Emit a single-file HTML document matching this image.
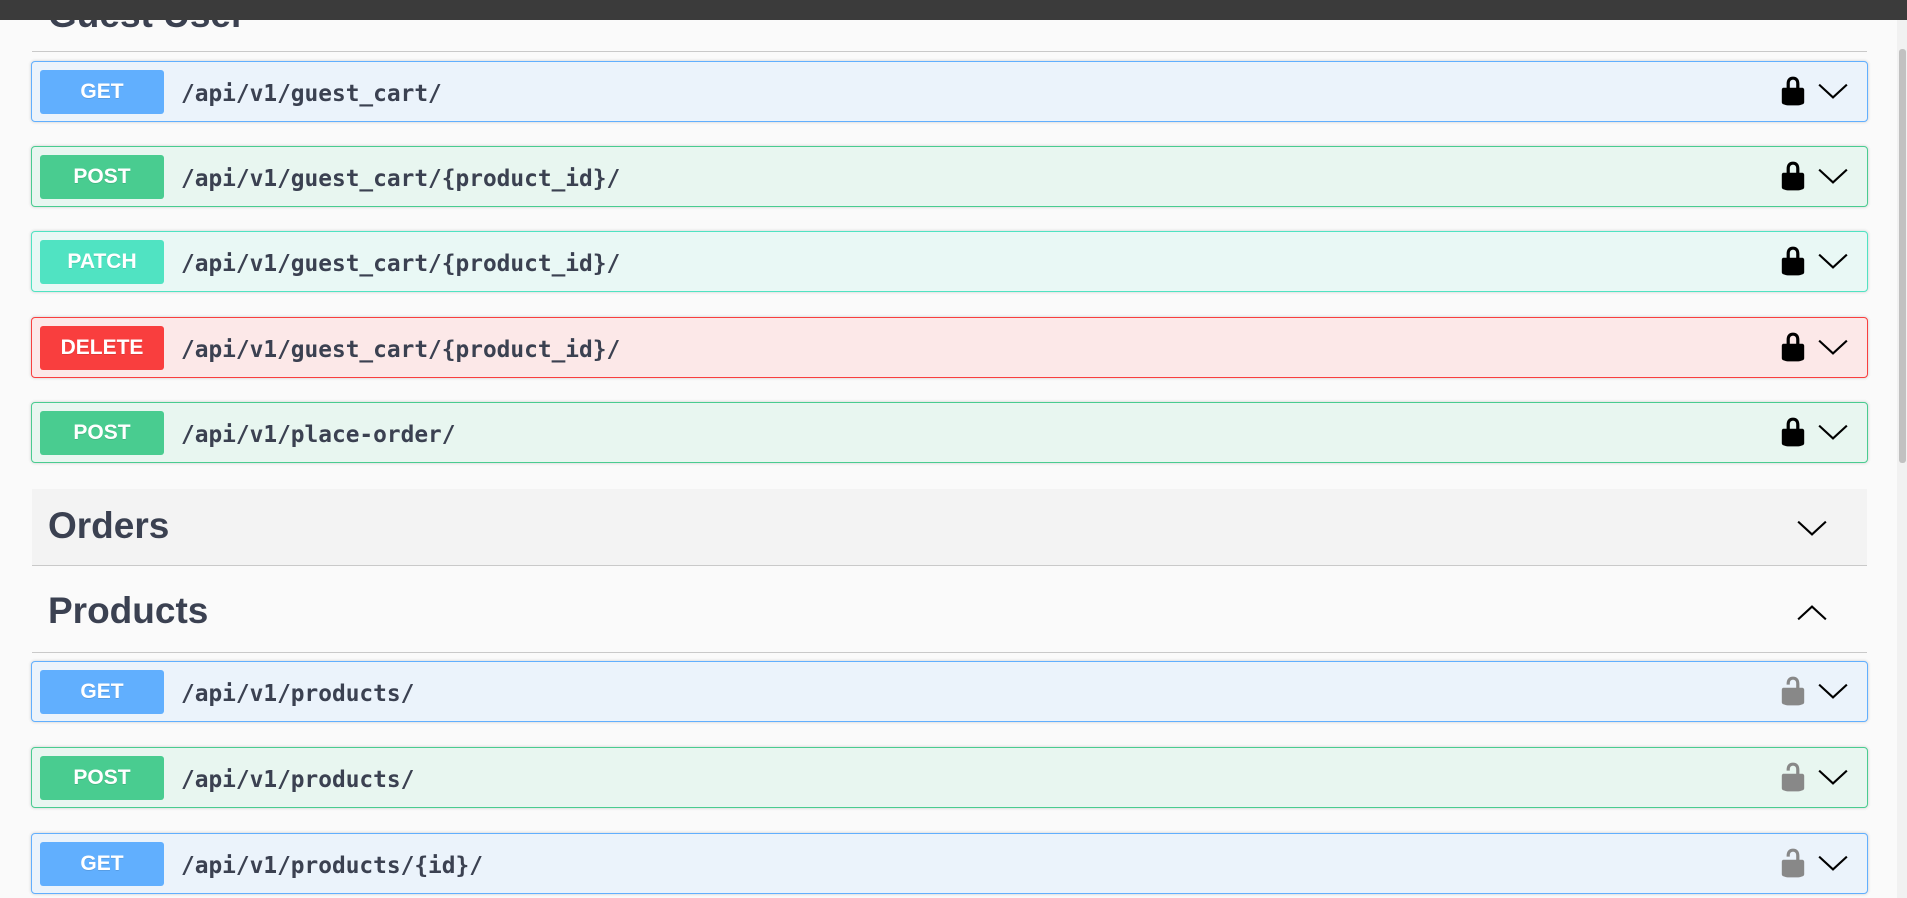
<!DOCTYPE html>
<html><head><meta charset="utf-8"><style>
*{margin:0;padding:0;box-sizing:border-box}
body{width:1907px;height:898px;overflow:hidden;background:#fafafa;position:relative;font-family:"Liberation Sans",sans-serif}
.top{position:absolute;left:0;top:0;width:1907px;height:20px;background:#3b3b3b;z-index:5}
.sb{position:absolute;left:1897px;top:20px;width:10px;height:878px;background:#f1f1f1}
.sb i{position:absolute;left:2px;top:29px;width:7px;height:414px;background:#c1c1c1;border-radius:3px}
.h{position:absolute;left:48px;font-size:37px;font-weight:bold;color:#3b4151}
.line{position:absolute;left:32px;width:1835px;height:1px;background:#c9c9c9}
.op{position:absolute;left:31px;width:1837px;height:61px;border:1px solid;border-radius:4px;box-shadow:0 0 3px rgba(0,0,0,.19)}
.b{position:absolute;left:8px;top:8px;width:124px;height:44px;border-radius:3px;color:#fff;font-weight:bold;font-size:21px;text-align:center;line-height:44px;text-shadow:0 1px 0 rgba(0,0,0,.1)}
.p{position:absolute;left:149px;top:3px;line-height:59px;font-family:"DejaVu Sans Mono","Liberation Mono",monospace;font-weight:bold;font-size:22.8px;color:#3b4151}
.lk{position:absolute;left:1745px;top:13px;width:32px;height:32px}
.cv{position:absolute;left:1785px;top:18px;width:32px;height:22px}
.get{background:#ebf3fb;border-color:#61affe}.get .b{background:#61affe}
.post{background:#e8f6f0;border-color:#49cc90}.post .b{background:#49cc90}
.patch{background:#e9f8f5;border-color:#50e3c2}.patch .b{background:#50e3c2}
.del{background:#fce8e8;border-color:#f93e3e}.del .b{background:#f93e3e}
</style></head><body>
<div class="top"></div>
<div class="h" style="top:-6px">Guest User</div>
<div class="line" style="top:51px"></div>

<svg width="0" height="0" style="position:absolute">
<defs>
<path id="lc" d="M15.8 8H14V5.6C14 2.703 12.665 1 10 1 7.334 1 6 2.703 6 5.6V8H4c-.553 0-1 .646-1 1.199V17c0 .549.428 1.139.951 1.307l1.197.387C5.672 18.861 6.55 19 7.1 19h5.8c.549 0 1.428-.139 1.951-.307l1.196-.387c.524-.167.953-.757.953-1.306V9.199C17 8.646 16.352 8 15.8 8zM12 8H8V5.199C8 3.754 8.797 3 10 3s2 .754 2 2.199V8z"/>
<path id="lo" d="M15.8 8H14V5.6C14 2.703 12.665 1 10 1 7.334 1 6 2.703 6 5.6V6h2v-.801C8 3.754 8.797 3 10 3c1.203 0 2 .754 2 2.199V8H4c-.553 0-1 .646-1 1.199V17c0 .549.428 1.139.951 1.307l1.197.387C5.672 18.861 6.55 19 7.1 19h5.8c.549 0 1.428-.139 1.951-.307l1.196-.387c.524-.167.953-.757.953-1.306V9.199C17 8.646 16.352 8 15.8 8z"/>
</defs></svg>

<div class="op get" style="top:61px"><div class="b">GET</div><div class="p">/api/v1/guest_cart/</div><svg class="lk" viewBox="0 0 20 20"><use href="#lc"/></svg><svg class="cv" viewBox="0 0 30 20"><polyline points="2,4 15,16 28,4" fill="none" stroke="#000" stroke-width="2"/></svg></div>
<div class="op post" style="top:146px"><div class="b">POST</div><div class="p">/api/v1/guest_cart/{product_id}/</div><svg class="lk" viewBox="0 0 20 20"><use href="#lc"/></svg><svg class="cv" viewBox="0 0 30 20"><polyline points="2,4 15,16 28,4" fill="none" stroke="#000" stroke-width="2"/></svg></div>
<div class="op patch" style="top:231px"><div class="b">PATCH</div><div class="p">/api/v1/guest_cart/{product_id}/</div><svg class="lk" viewBox="0 0 20 20"><use href="#lc"/></svg><svg class="cv" viewBox="0 0 30 20"><polyline points="2,4 15,16 28,4" fill="none" stroke="#000" stroke-width="2"/></svg></div>
<div class="op del" style="top:317px"><div class="b">DELETE</div><div class="p">/api/v1/guest_cart/{product_id}/</div><svg class="lk" viewBox="0 0 20 20"><use href="#lc"/></svg><svg class="cv" viewBox="0 0 30 20"><polyline points="2,4 15,16 28,4" fill="none" stroke="#000" stroke-width="2"/></svg></div>
<div class="op post" style="top:402px"><div class="b">POST</div><div class="p">/api/v1/place-order/</div><svg class="lk" viewBox="0 0 20 20"><use href="#lc"/></svg><svg class="cv" viewBox="0 0 30 20"><polyline points="2,4 15,16 28,4" fill="none" stroke="#000" stroke-width="2"/></svg></div>

<div style="position:absolute;left:32px;top:489px;width:1835px;height:76px;background:#f3f3f3"></div>
<div class="h" style="top:505px">Orders</div>
<svg style="position:absolute;left:1796px;top:517px" width="32" height="22" viewBox="0 0 30 20"><polyline points="2,4 15,16 28,4" fill="none" stroke="#000" stroke-width="2"/></svg>
<div class="line" style="top:565px"></div>
<div class="h" style="top:590px">Products</div>
<svg style="position:absolute;left:1796px;top:602px" width="32" height="22" viewBox="0 0 30 20"><polyline points="2,16 15,4 28,16" fill="none" stroke="#000" stroke-width="2"/></svg>
<div class="line" style="top:652px"></div>

<div class="op get" style="top:661px"><div class="b">GET</div><div class="p">/api/v1/products/</div><svg class="lk" viewBox="0 0 20 20"><use href="#lo" fill="#888"/></svg><svg class="cv" viewBox="0 0 30 20"><polyline points="2,4 15,16 28,4" fill="none" stroke="#000" stroke-width="2"/></svg></div>
<div class="op post" style="top:747px"><div class="b">POST</div><div class="p">/api/v1/products/</div><svg class="lk" viewBox="0 0 20 20"><use href="#lo" fill="#888"/></svg><svg class="cv" viewBox="0 0 30 20"><polyline points="2,4 15,16 28,4" fill="none" stroke="#000" stroke-width="2"/></svg></div>
<div class="op get" style="top:833px"><div class="b">GET</div><div class="p">/api/v1/products/{id}/</div><svg class="lk" viewBox="0 0 20 20"><use href="#lo" fill="#888"/></svg><svg class="cv" viewBox="0 0 30 20"><polyline points="2,4 15,16 28,4" fill="none" stroke="#000" stroke-width="2"/></svg></div>

<div class="sb"><i></i></div>
</body></html>
